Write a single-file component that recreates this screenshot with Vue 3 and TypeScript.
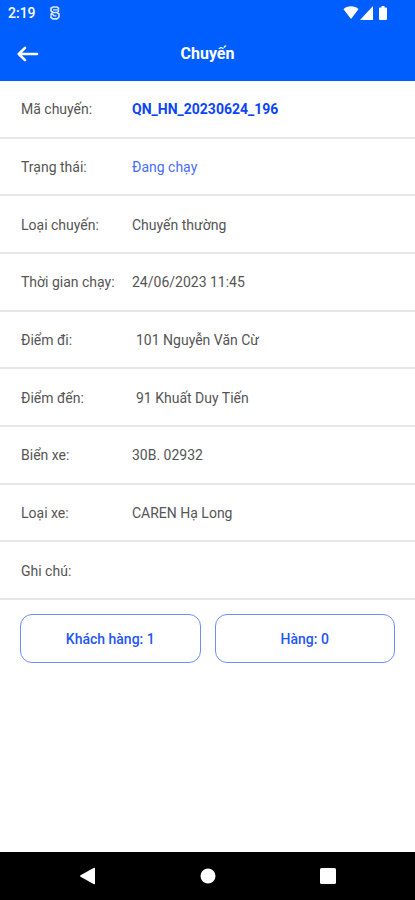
<script setup lang="ts">
interface TripField {
  label: string
  value: string
  tone?: 'code' | 'running'
  indented?: boolean
}

const fields: TripField[] = [
  { label: 'Mã chuyến:', value: 'QN_HN_20230624_196', tone: 'code' },
  { label: 'Trạng thái:', value: 'Đang chạy', tone: 'running' },
  { label: 'Loại chuyến:', value: 'Chuyến thường' },
  { label: 'Thời gian chạy:', value: '24/06/2023 11:45' },
  { label: 'Điểm đi:', value: '101 Nguyễn Văn Cừ', indented: true },
  { label: 'Điểm đến:', value: '91 Khuất Duy Tiến', indented: true },
  { label: 'Biển xe:', value: '30B. 02932' },
  { label: 'Loại xe:', value: 'CAREN Hạ Long' },
  { label: 'Ghi chú:', value: '' },
]

const passengers = 1
const parcels = 0
</script>

<template>
  <div class="screen">
    <header class="top">
      <div class="status">
        <span class="clock">2:19</span>
        <svg class="app-mark" width="12" height="14" viewBox="0 0 12 14" fill="none" stroke="currentColor">
          <path d="M9.500 3.500V2.200L8 1H4L2 2.300V5L4 6.500H8L10 8V11L8 12.900H4L2 11.500V9.500" stroke-width="1.600" />
          <path d="M4 3.800H9.500M2 8.500H4L5 9.800H7.500M9.500 3.800V5.500L8 6.500M2 9.500V7.800L4 6.500" stroke-width="1.300" />
        </svg>
        <svg class="signals" width="46" height="16" viewBox="0 0 46 16" fill="currentColor">
          <path d="M0.500 4.200C4.300 0.400 11.700 0.400 15.500 4.200L8 14Z" />
          <path d="M30 1V15H17Z" />
          <path d="M38.500 1h3v1.500H43a1 1 0 0 1 1 1V14a1 1 0 0 1-1 1h-6a1 1 0 0 1-1-1V3.500a1 1 0 0 1 1-1h1.500z" />
        </svg>
      </div>
      <div class="bar">
        <button class="back" type="button" aria-label="Quay lại">
          <svg width="22" height="16" viewBox="0 0 22 16" fill="none" stroke="currentColor" stroke-width="2.600" stroke-linecap="round" stroke-linejoin="round">
            <path d="M20 8H2M8 1.800L1.800 8L8 14.200" />
          </svg>
        </button>
        <h1>Chuyến</h1>
      </div>
    </header>

    <main>
      <dl class="fields">
        <div v-for="field in fields" :key="field.label" class="row">
          <dt>{{ field.label }}</dt>
          <dd :class="[field.tone, { indented: field.indented }]">{{ field.value }}</dd>
        </div>
      </dl>
      <div class="actions">
        <button type="button">Khách hàng: {{ passengers }}</button>
        <button type="button">Hàng: {{ parcels }}</button>
      </div>
    </main>

    <nav class="system">
      <button type="button" aria-label="Trở về">
        <svg width="18" height="18" viewBox="0 0 18 18" fill="currentColor"><path d="M1.500 8.200L15 0.800Q16 0.400 16 1.500V16.500Q16 17.600 15 17.200L1.500 9.800Q0.500 9 1.500 8.200Z" /></svg>
      </button>
      <button type="button" aria-label="Màn hình chính">
        <svg width="18" height="18" viewBox="0 0 18 18" fill="currentColor"><circle cx="9" cy="9" r="7.500" /></svg>
      </button>
      <button type="button" aria-label="Gần đây">
        <svg width="18" height="18" viewBox="0 0 18 18" fill="currentColor"><rect x="1" y="1" width="16" height="16" rx="1.500" /></svg>
      </button>
    </nav>
  </div>
</template>

<style>
body {
  margin: 0;
}
</style>

<style scoped>
.screen {
  display: flex;
  flex-direction: column;
  min-height: 100vh;
  background: #fff;
  color: #555;
  font-family: Roboto, "Noto Sans", sans-serif;
  font-size: 14px;
  line-height: 20px;
}

button {
  margin: 0;
  padding: 0;
  border: 0;
  background: none;
  color: inherit;
  font: inherit;
  cursor: pointer;
}

svg {
  display: block;
}

.top {
  background: #005eff;
  color: #fff;
}

.status {
  display: flex;
  align-items: center;
  height: 26px;
  padding: 0 26px 0 8px;
}

.clock {
  font-weight: 500;
}

.app-mark {
  margin-left: 13px;
  opacity: 0.85;
}

.signals {
  margin-left: auto;
}

.bar {
  display: grid;
  grid-template-columns: 40px 1fr 40px;
  align-items: center;
  height: 55px;
  padding: 0 8px;
}

.back {
  display: grid;
  place-items: center;
  height: 40px;
}

h1 {
  margin: 0;
  font-size: 16px;
  font-weight: 700;
  text-align: center;
}

main {
  flex: 1;
}

.fields {
  display: grid;
  grid-auto-rows: 1fr;
  min-height: 519px;
  margin: 0;
}

.row {
  display: grid;
  grid-template-columns: 111px 1fr;
  align-items: center;
  padding: 1px 21px 0;
  border-bottom: 2px solid #e7e7e7;
}

dt,
dd {
  margin: 0;
}

.code {
  color: #0b45f5;
  font-weight: 700;
}

.running {
  color: #4b6ef8;
}

.indented {
  padding-left: 4px;
}

.actions {
  display: grid;
  grid-template-columns: 1fr 1fr;
  gap: 14px;
  padding: 14px 20px;
}

.actions button {
  height: 49px;
  border: 1px solid #6f8df8;
  border-radius: 12px;
  color: #1f56f5;
  font-weight: 500;
}

.system {
  display: flex;
  justify-content: center;
  gap: 72px;
  height: 48px;
  background: #000;
  color: #fff;
}

.system button {
  display: grid;
  place-items: center;
  width: 48px;
}
</style>
